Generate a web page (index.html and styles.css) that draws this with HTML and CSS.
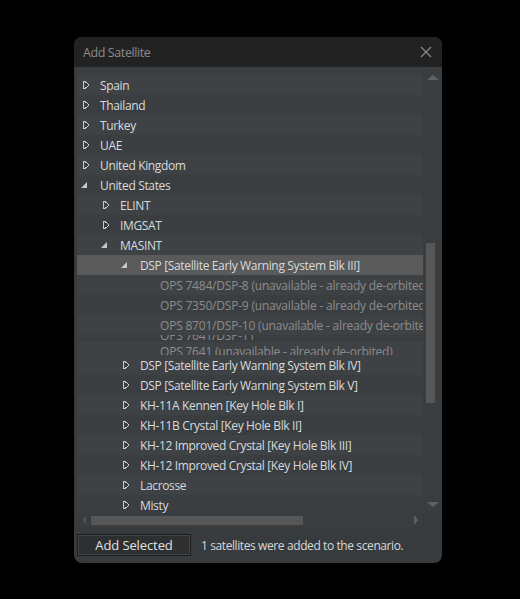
FILE: index.html
```html
<!DOCTYPE html>
<html lang="en">
<head>
  <meta charset="UTF-8">
  <title>Add Satellite</title>
  <link rel="stylesheet" href="styles.css">
</head>
<body>

<div class="dialog">
  <div class="titlebar">
    <span class="title">Add Satellite</span>
    <svg class="close" width="12" height="12" viewBox="0 0 12 12"><path d="M1 1L11 11M11 1L1 11" stroke="#8a8a8a" stroke-width="1.2"/></svg>
  </div>

  <div class="tree-frame">
    <div class="tree-view">
      <div class="tree">
        <div class="row l0 peek"><span>Soviet Union (USSR)</span></div>
        <div class="row l0 alt"><span class="arrow closed"></span>Spain</div>
        <div class="row l0"><span class="arrow closed"></span>Thailand</div>
        <div class="row l0 alt"><span class="arrow closed"></span>Turkey</div>
        <div class="row l0"><span class="arrow closed"></span>UAE</div>
        <div class="row l0 alt"><span class="arrow closed"></span>United Kingdom</div>
        <div class="row l0"><span class="arrow open"></span>United States</div>
        <div class="row l1 alt"><span class="arrow closed"></span>ELINT</div>
        <div class="row l1"><span class="arrow closed"></span>IMGSAT</div>
        <div class="row l1 alt"><span class="arrow open"></span>MASINT</div>
        <div class="row l2 selected"><span class="arrow open"></span>DSP [Satellite Early Warning System Blk III]</div>
        <div class="row l3 alt off">OPS 7484/DSP-8 (unavailable - already de-orbited)</div>
        <div class="row l3 off">OPS 7350/DSP-9 (unavailable - already de-orbited)</div>
        <div class="row l3 alt off">OPS 8701/DSP-10 (unavailable - already de-orbited)</div>
        <div class="row l3 off squeezed top"><span>OPS 7641/DSP-11</span></div>
        <div class="row l3 off squeezed bottom"><span>OPS 7641 (unavailable - already de-orbited)</span></div>
        <div class="row l2 alt"><span class="arrow closed"></span>DSP [Satellite Early Warning System Blk IV]</div>
        <div class="row l2"><span class="arrow closed"></span>DSP [Satellite Early Warning System Blk V]</div>
        <div class="row l2 alt"><span class="arrow closed"></span>KH-11A Kennen [Key Hole Blk I]</div>
        <div class="row l2"><span class="arrow closed"></span>KH-11B Crystal [Key Hole Blk II]</div>
        <div class="row l2 alt"><span class="arrow closed"></span>KH-12 Improved Crystal [Key Hole Blk III]</div>
        <div class="row l2"><span class="arrow closed"></span>KH-12 Improved Crystal [Key Hole Blk IV]</div>
        <div class="row l2 alt"><span class="arrow closed"></span>Lacrosse</div>
        <div class="row l2"><span class="arrow closed"></span>Misty</div>
        <div class="row l2 alt"><span class="arrow closed"></span>NOSS</div>
      </div>
    </div>

    <div class="vscroll">
      <span class="tri up"></span>
      <div class="vtrack"><div class="vthumb"></div></div>
      <span class="tri down"></span>
    </div>

    <div class="hscroll">
      <span class="tri left"></span>
      <div class="htrack"><div class="hthumb"></div></div>
      <span class="tri right"></span>
    </div>
    <div class="corner"></div>
  </div>

  <div class="footer">
    <button class="btn">Add Selected</button>
    <span class="status">1 satellites were added to the scenario.</span>
  </div>
</div>

</body>
</html>
```

FILE: styles.css
```css
* {
  box-sizing: border-box;
  margin: 0;
  padding: 0;
}

body {
  background: #000;
  font-family: 'Open Sans', 'Liberation Sans', sans-serif;
  font-size: 12px;
  letter-spacing: -0.35px;
}

.dialog {
  margin: 37px 0 0 74px;
  width: 368px;
  height: 526px;
  background: #383b3e;
  border-radius: 8px;
  overflow: hidden;
  display: flex;
  flex-direction: column;
}

.titlebar {
  height: 30px;
  flex: none;
  background: #222222;
  display: flex;
  align-items: center;
  justify-content: space-between;
  padding: 0 10px 0 9px;
}

.title {
  color: #8b8b8b;
  font-size: 12.5px;
  letter-spacing: -0.4px;
}

.tree-frame {
  display: grid;
  grid-template-columns: 346px 19px;
  grid-template-rows: 446px 14px;
  margin-left: 3px;
}

.tree-view {
  overflow: hidden;
  background: #3b3e41;
  border-top: 2px solid #3a3d40;
}

.tree {
  margin-top: -14px;
  width: 420px;
}

.row {
  height: 20px;
  line-height: 20px;
  padding-top: 1px;
  color: #d8dbde;
  white-space: nowrap;
  display: flex;
  align-items: center;
  background: #3b3e41;
}

.row.alt {
  background: #3f4245;
}

.row.selected {
  background: #5a5a5a;
}

.row.off {
  color: #8c8c8c;
  letter-spacing: -0.2px;
}

.l0 { padding-left: 23px; }
.l1 { padding-left: 43px; }
.l2 { padding-left: 63px; }
.l3 { padding-left: 83px; }

.arrow {
  width: 13px;
  height: 20px;
  flex: none;
  position: relative;
  margin-left: -13px;
}

.arrow.closed::before {
  content: "";
  position: absolute;
  left: -4px;
  top: 5px;
  width: 5px;
  height: 8px;
  background:
    linear-gradient(to top right, transparent 45%, #c8c8c8 46%, #c8c8c8 60%, transparent 61%) 0 0 / 5px 4px no-repeat,
    linear-gradient(to bottom right, transparent 45%, #c8c8c8 46%, #c8c8c8 60%, transparent 61%) 0 4px / 5px 4px no-repeat;
  border-left: 1.2px solid #c8c8c8;
}

.arrow.open::before {
  content: "";
  position: absolute;
  left: -6px;
  top: 6px;
  width: 0;
  height: 0;
  border-style: solid;
  border-width: 0 0 6px 6px;
  border-color: transparent transparent #c8c8c8 transparent;
}

.peek,
.squeezed {
  overflow: hidden;
  align-items: flex-start;
  padding-top: 0;
}

.peek span {
  display: block;
  margin-top: -3px;
}

.squeezed.top {
  height: 7px;
  background: #3b3e41;
}

.squeezed.top span {
  display: block;
  margin-top: -9px;
}

.squeezed.bottom {
  height: 13px;
  background: #3f4245;
}

.squeezed.bottom span {
  display: block;
}

.vscroll {
  background: #3a3d40;
  display: flex;
  flex-direction: column;
  align-items: center;
  padding: 8px 0 6px;
}

.vtrack {
  flex: 1;
  width: 100%;
  padding: 163px 6px 95px 3px;
}

.vthumb {
  width: 9px;
  height: 160px;
  background: #575757;
}

.hscroll {
  background: #3a3d40;
  display: flex;
  align-items: center;
  padding: 0 5px;
}

.htrack {
  flex: 1;
  height: 9px;
  margin: 0 6px 0 5px;
}

.hthumb {
  width: 212px;
  height: 9px;
  background: #575757;
}

.corner {
  background: #383b3e;
}

.tri {
  width: 0;
  height: 0;
  border-style: solid;
  flex: none;
}

.tri.up {
  border-width: 0 6px 5px 6px;
  border-color: transparent transparent #5e6165 transparent;
}

.tri.down {
  border-width: 5px 6px 0 6px;
  border-color: #5e6165 transparent transparent transparent;
}

.tri.left {
  border-width: 5px 4px 5px 0;
  border-color: transparent #4c4f52 transparent transparent;
}

.tri.right {
  border-width: 5px 0 5px 4px;
  border-color: transparent transparent transparent #5e6165;
}

.footer {
  flex: 1;
  display: flex;
  align-items: flex-start;
  padding: 7px 0 0 3px;
  gap: 10px;
}

.btn {
  width: 114px;
  height: 22px;
  background: #2e2f30;
  border: 1px solid #1b1b1b;
  color: #e2e2e2;
  font-family: inherit;
  font-size: 13px;
  letter-spacing: -0.1px;
  box-shadow: inset 0 0 0 1px #454545;
}

.status {
  color: #d6d8da;
  font-size: 12px;
  letter-spacing: -0.4px;
  line-height: 22px;
  margin-top: 1px;
}
```
